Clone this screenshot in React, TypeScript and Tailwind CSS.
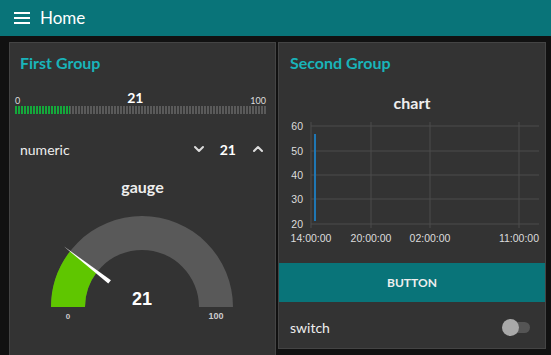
import { ChevronDown, ChevronUp } from 'lucide-react';

const ui = { fontFamily: 'Lato, "Open Sans", sans-serif' };
const arial = 'Liberation Sans, Arial, sans-serif';

function Header() {
  return (
    <header className="flex h-9 items-center bg-[#097479] pl-[14px] text-white">
      <svg width="16" height="12" viewBox="0 0 16 12" className="mr-[10px]">
        <rect x="0" y="0" width="16" height="2" fill="#fff" />
        <rect x="0" y="5" width="16" height="2" fill="#fff" />
        <rect x="0" y="10" width="16" height="2" fill="#fff" />
      </svg>
      <span className="text-[17px]">Home</span>
    </header>
  );
}

function LevelBar({ value }: { value: number }) {
  return (
    <div className="pl-[5px] pr-[9px] pt-[10px]">
      <div className="flex h-[13px] items-end justify-between leading-none">
        <span className="text-[9px] text-[#ddd]">0</span>
        <span className="text-[14px] font-bold text-white">{value}</span>
        <span className="text-[9px] text-[#ddd]">100</span>
      </div>
      <div className="relative mt-[1px] h-[8px] bg-[repeating-linear-gradient(90deg,#5a5a5a_0,#5a5a5a_2px,transparent_2px,transparent_3px)]">
        <div
          className="absolute left-0 top-0 h-full bg-[repeating-linear-gradient(90deg,#14a83b_0,#14a83b_2px,transparent_2px,transparent_3px)]"
          style={{ width: `${value + 1}%` }}
        />
      </div>
    </div>
  );
}

function Gauge({ value }: { value: number }) {
  const cx = 132;
  const cy = 102;
  const R = 91;
  const r = 57;
  const a = Math.PI * (1 - value / 100);
  const ox = cx + R * Math.cos(a);
  const oy = cy - R * Math.sin(a);
  const ix = cx + r * Math.cos(a);
  const iy = cy - r * Math.sin(a);
  const dx = Math.cos(a);
  const dy = -Math.sin(a);
  const bx = cx + 41 * dx;
  const by = cy + 41 * dy;
  const tx = cx + 99 * dx;
  const ty = cy + 99 * dy;
  const px = -dy;
  const py = dx;
  return (
    <svg width="265" height="130" viewBox="0 0 265 130">
      <path
        d={`M ${cx - R} ${cy} A ${R} ${R} 0 0 1 ${cx + R} ${cy} L ${cx + r} ${cy} A ${r} ${r} 0 0 0 ${cx - r} ${cy} Z`}
        fill="#595959"
      />
      <path
        d={`M ${cx - R} ${cy} A ${R} ${R} 0 0 1 ${ox} ${oy} L ${ix} ${iy} A ${r} ${r} 0 0 0 ${cx - r} ${cy} Z`}
        fill="#5fc600"
      />
      <polygon
        points={`${bx + 2.2 * px},${by + 2.2 * py} ${bx - 2.2 * px},${by - 2.2 * py} ${tx},${ty}`}
        fill="#fff"
      />
      <text x={cx} y={cy - 2} textAnchor="middle" fill="#fff" fontFamily={arial} fontWeight="bold" fontSize="18">
        {value}
      </text>
      <text x="58" y="114" textAnchor="middle" fill="#ccc" fontFamily={arial} fontWeight="bold" fontSize="8">
        0
      </text>
      <text x="206" y="114" textAnchor="middle" fill="#ccc" fontFamily={arial} fontWeight="bold" fontSize="9">
        100
      </text>
    </svg>
  );
}

function Chart() {
  const rows = [
    { y: 7, label: '60' },
    { y: 32, label: '50' },
    { y: 56, label: '40' },
    { y: 80, label: '30' },
    { y: 105, label: '20' },
  ];
  const cols = [
    { x: 32, label: '14:00:00' },
    { x: 92, label: '20:00:00' },
    { x: 151, label: '02:00:00' },
    { x: 240, label: '11:00:00' },
  ];
  return (
    <svg width="266" height="136" viewBox="0 0 266 136">
      {rows.map((row) => (
        <g key={row.label}>
          <line x1="32" x2="260" y1={row.y} y2={row.y} stroke="#4d4d4d" strokeWidth="1" />
          <text x="24" y={row.y + 3.5} textAnchor="end" fill="#ddd" fontFamily={arial} fontSize="10.5">
            {row.label}
          </text>
        </g>
      ))}
      {cols.map((col) => (
        <g key={col.label}>
          <line x1={col.x} x2={col.x} y1="3" y2="109" stroke="#4d4d4d" strokeWidth="1" />
          <text x={col.x} y="123" textAnchor="middle" fill="#ddd" fontFamily={arial} fontSize="10.5">
            {col.label}
          </text>
        </g>
      ))}
      <line x1="36" x2="36" y1="15" y2="102" stroke="#1f77b4" strokeWidth="2" />
    </svg>
  );
}

export default function App() {
  return (
    <div className="min-h-screen bg-[#111111]" style={ui}>
      <Header />

      <div className="flex items-start gap-[2px] pl-[9px] pt-[6px]">
        {/* First Group */}
        <div className="w-[267px] border border-[#444] bg-[#333333] pb-[30px]">
          <div className="flex h-[39px] items-center pl-[10px] text-[16px] font-bold text-[#19b4ba]">
            First Group
          </div>
          <LevelBar value={21} />
          <div className="mt-[15px] flex h-[40px] items-center pl-[10px] pr-[9px] text-[14px] text-[#eee]">
            <span className="flex-1">numeric</span>
            <ChevronDown size={16} strokeWidth={3} className="text-[#ddd]" />
            <span className="ml-[13px] mr-[14px] font-bold text-white">21</span>
            <ChevronUp size={16} strokeWidth={3} className="text-[#ddd]" />
          </div>
          <div className="flex h-[36px] items-center justify-center text-[16px] font-bold text-[#eee]">
            gauge
          </div>
          <Gauge value={21} />
        </div>

        {/* Second Group */}
        <div className="w-[268px] border border-[#444] bg-[#333333]">
          <div className="flex h-[39px] items-center pl-[11px] text-[16px] font-bold text-[#19b4ba]">
            Second Group
          </div>
          <div className="mt-[4px] flex h-[33px] items-center justify-center text-[16px] font-bold text-[#eee]">
            chart
          </div>
          <Chart />
          <button className="mt-[8px] flex h-[39px] w-full items-center justify-center bg-[#097479] text-[12px] font-bold text-[#eee]">
            BUTTON
          </button>
          <div className="flex h-[46px] items-center justify-between pl-[11px] pr-[15px] pt-[5px] text-[14px] text-[#eee]">
            <span>switch</span>
            <div className="relative h-[11px] w-[25px] rounded-full bg-[#555]">
              <div className="absolute left-[-3px] top-[-3px] h-[17px] w-[17px] rounded-full bg-[#a9a9a9]" />
            </div>
          </div>
        </div>
      </div>
    </div>
  );
}
